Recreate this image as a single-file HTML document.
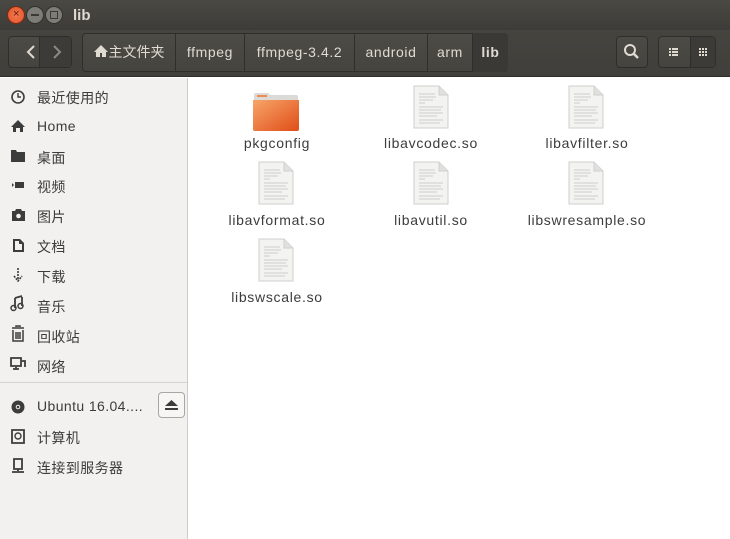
<!DOCTYPE html>
<html><head><meta charset="utf-8"><style>
*{margin:0;padding:0;box-sizing:border-box}
body{width:730px;height:539px;overflow:hidden;font-family:"Liberation Sans","Noto Sans CJK SC",sans-serif;background:#fff;position:relative}
.title{position:absolute;left:0;top:0;width:730px;height:30px;background:linear-gradient(#4a4944,#3d3c38);}
.tb{position:absolute;left:0;top:30px;width:730px;height:47px;background:linear-gradient(#45443f,#403f3b);border-bottom:1px solid #2e2d2a}
.wb{position:absolute;top:6px;width:18px;height:18px;border-radius:50%;}
.btn{position:absolute;border:1px solid #2f2e2b;border-radius:4px;background:linear-gradient(#4c4b46,#45443f);}
.seg{position:absolute;top:33px;height:39px;border-right:1px solid #2f2e2b;color:#dfdbd2;font-size:14px;line-height:39px;text-align:center;letter-spacing:.6px}
.side{position:absolute;left:0;top:78px;width:188px;height:461px;background:#f2f1f0;border-right:1px solid #cfcdca}
.it{position:absolute;left:37px;font-size:14px;color:#3c3c3c;letter-spacing:.4px}
.lbl{position:absolute;font-size:14px;color:#3c3c3c;text-align:center;width:150px;letter-spacing:.7px}
.f{position:absolute;width:36px;height:44px}
</style></head><body>
<div class="title">
<div class="wb" style="left:7px;background:radial-gradient(#f4784f,#e2532a);border:1px solid #7a2a14"><span style="position:absolute;left:5px;top:1px;font-size:11px;color:#5a1a08">×</span></div>
<div class="wb" style="left:26px;background:#7e7c76;border:1px solid #33322e"><span style="position:absolute;left:4px;top:7px;width:8px;height:2px;background:#3a3935"></span></div>
<div class="wb" style="left:45px;background:#7e7c76;border:1px solid #33322e"><span style="position:absolute;left:4px;top:4px;width:8px;height:8px;border:1.5px solid #3a3935"></span></div>
<div style="position:absolute;left:73px;top:7px;color:#dfdbd2;font-weight:bold;font-size:15px">lib</div>
</div>
<div class="tb"></div>
<div class="btn" style="left:8px;top:36px;width:64px;height:32px"></div>
<div style="position:absolute;left:39px;top:36px;width:1px;height:32px;background:#2f2e2b"></div>
<div style="position:absolute;left:40px;top:37px;width:31px;height:30px;background:#3c3b37"></div>
<svg style="position:absolute;left:8px;top:36px" width="64" height="32"><path d="M26 10 L20 16 L26 22" stroke="#dfdbd2" stroke-width="2" fill="none"/><path d="M46 10 L52 16 L46 22" stroke="#8c8a84" stroke-width="2" fill="none"/></svg>
<div class="btn" style="left:82px;top:33px;width:426px;height:39px"></div>
<div class="seg" style="left:82px;width:94px;letter-spacing:0"><svg width="16" height="14" style="vertical-align:-1px"><path d="M8 1 L15 8 H13 V13 H9 V9 H7 V13 H3 V8 H1 Z" fill="#dfdbd2"/></svg>主文件夹</div>
<div class="seg" style="left:176px;width:69px">ffmpeg</div>
<div class="seg" style="left:245px;width:110px">ffmpeg-3.4.2</div>
<div class="seg" style="left:355px;width:73px">android</div>
<div class="seg" style="left:428px;width:45px">arm</div>
<div class="seg" style="left:473px;width:35px;background:#3a3935;border-right:none;border-radius:0 4px 4px 0;font-weight:bold">lib</div>
<div class="btn" style="left:616px;top:36px;width:32px;height:32px"><svg width="30" height="30"><circle cx="13" cy="13" r="5" stroke="#dfdbd2" stroke-width="2" fill="none"/><path d="M17 17 L21 21" stroke="#dfdbd2" stroke-width="2.5"/></svg></div>
<div class="btn" style="left:658px;top:36px;width:58px;height:32px"><div style="position:absolute;left:31px;top:0;width:25px;height:30px;background:#3c3b37;border-left:1px solid #2f2e2b"></div><svg width="58" height="30" style="position:absolute;left:0;top:0"><g fill="#dfdbd2"><rect x="10" y="11" width="2" height="2"/><rect x="13" y="11" width="6" height="2"/><rect x="10" y="14" width="2" height="2"/><rect x="13" y="14" width="6" height="2"/><rect x="10" y="17" width="2" height="2"/><rect x="13" y="17" width="6" height="2"/><rect x="40" y="11" width="2" height="2"/><rect x="43" y="11" width="2" height="2"/><rect x="46" y="11" width="2" height="2"/><rect x="40" y="14" width="2" height="2"/><rect x="43" y="14" width="2" height="2"/><rect x="46" y="14" width="2" height="2"/><rect x="40" y="17" width="2" height="2"/><rect x="43" y="17" width="2" height="2"/><rect x="46" y="17" width="2" height="2"/></g></svg></div>
<div class="side">
<svg width="30" height="400" style="position:absolute;left:0;top:0" fill="#3c3c3c" stroke="#3c3c3c">
<circle cx="18" cy="19" r="6" fill="none" stroke-width="1.6"/><path d="M18 15V19H21" fill="none" stroke-width="1.4"/>
<path d="M18 42 L25 49 H23 V54 H20 V50 H16 V54 H13 V49 H11 Z" stroke="none"/>
<path d="M11 72 H16 L17 74 H25 V84 H11 Z" stroke="none"/>
<path d="M12 105 L14 107 L12 109 Z M15 104 H24 V110 H15 Z" stroke="none"/>
<path d="M12 133 H15 L16 131 H21 L22 133 H25 V143 H12 Z" stroke="none"/><circle cx="18.5" cy="138" r="2.3" fill="#f2f1f0" stroke="none"/>
<path d="M13 161 H20 L24 165 V174 H13 Z M15 163 V172 H22 V166 H19 V163 Z" stroke="none" fill-rule="evenodd"/>
<path d="M18 190 V202 M14 198 L18 203 L22 198" fill="none" stroke-width="1.6" stroke-dasharray="2 1"/>
<path d="M15 220 V230 M22 219 V228 M15 220 L22 218" fill="none" stroke-width="1.8"/><circle cx="13.5" cy="230" r="2.5" fill="none" stroke-width="1.5"/><circle cx="20.5" cy="228" r="2.5" fill="none" stroke-width="1.5"/>
<path d="M12 250 H24 M16 249 V248 H20 V249 M13 252 V263 H23 V252 M16 254 V261 M18 254 V261 M20 254 V261" fill="none" stroke-width="1.5"/>
<path d="M11 280 H21 V288 H11 Z M16 289 V291 M13 291 H19 M22 283 H25 V289" fill="none" stroke-width="1.8"/>
<circle cx="18" cy="329" r="6.5" stroke="none"/><circle cx="18" cy="329" r="1.8" fill="none" stroke="#f2f1f0"/>
<path d="M12 352 H24 V365 H12 Z" fill="none" stroke-width="1.8"/><circle cx="18" cy="358" r="3" fill="none" stroke-width="1.4"/>
<path d="M14 381 H22 V391 H14 Z M18 391 V393 M12 394 H24" fill="none" stroke-width="1.8"/>
</svg>
<div class="it" style="top:10px">最近使用的</div>
<div class="it" style="top:40px">Home</div>
<div class="it" style="top:70px">桌面</div>
<div class="it" style="top:99px">视频</div>
<div class="it" style="top:129px">图片</div>
<div class="it" style="top:159px">文档</div>
<div class="it" style="top:189px">下载</div>
<div class="it" style="top:219px">音乐</div>
<div class="it" style="top:249px">回收站</div>
<div class="it" style="top:279px">网络</div>
<div style="position:absolute;left:0;top:304px;width:187px;height:1px;background:#d6d4d1"></div>
<div class="it" style="top:320px">Ubuntu 16.04....</div>
<div style="position:absolute;left:158px;top:314px;width:27px;height:26px;border:1px solid #a9a7a2;border-radius:4px;background:#f7f6f5"><svg width="25" height="24"><path d="M6 13 L12.5 7 L19 13 Z M6 15 H19 V17 H6 Z" fill="#3c3c3c"/></svg></div>
<div class="it" style="top:350px">计算机</div>
<div class="it" style="top:380px">连接到服务器</div>
</div>
<svg style="position:absolute;left:253px;top:92px" width="46" height="40"><defs><linearGradient id="fg" x1="0" y1="0" x2="1" y2="1"><stop offset="0" stop-color="#f7a56a"/><stop offset="1" stop-color="#e04d17"/></linearGradient></defs><path d="M1 3 Q1 1 3 1 H15 L17 3 H43 Q45 3 45 5 V10 H1 Z" fill="#dcdad6"/><rect x="4" y="3" width="10" height="2" fill="#f08a55"/><path d="M0 8 H46 V37 Q46 39 44 39 H2 Q0 39 0 37 Z" fill="url(#fg)"/></svg>
<svg width="0" height="0" style="position:absolute"><defs><g id="doc"><path d="M1 1 H26 L35 10 V43 H1 Z" fill="#f3f3f2" stroke="#cfcfcd"/><path d="M26 1 V10 H35" fill="#e0e0de" stroke="#cfcfcd"/><g stroke="#cdcdcb" stroke-width="1"><path d="M6 9H22M6 12H23M6 15H20M6 18H12M6 22H30M6 25H28M6 28H30M6 31H24M6 35H30M6 38H27"/></g></g></defs></svg>
<svg class="f" style="left:413px;top:85px"><use href="#doc"/></svg>
<svg class="f" style="left:568px;top:85px"><use href="#doc"/></svg>
<svg class="f" style="left:258px;top:161px"><use href="#doc"/></svg>
<svg class="f" style="left:413px;top:161px"><use href="#doc"/></svg>
<svg class="f" style="left:568px;top:161px"><use href="#doc"/></svg>
<svg class="f" style="left:258px;top:238px"><use href="#doc"/></svg>
<div class="lbl" style="left:202px;top:135px">pkgconfig</div>
<div class="lbl" style="left:356px;top:135px">libavcodec.so</div>
<div class="lbl" style="left:512px;top:135px">libavfilter.so</div>
<div class="lbl" style="left:202px;top:212px">libavformat.so</div>
<div class="lbl" style="left:356px;top:212px">libavutil.so</div>
<div class="lbl" style="left:512px;top:212px">libswresample.so</div>
<div class="lbl" style="left:202px;top:289px">libswscale.so</div>
</body></html>
